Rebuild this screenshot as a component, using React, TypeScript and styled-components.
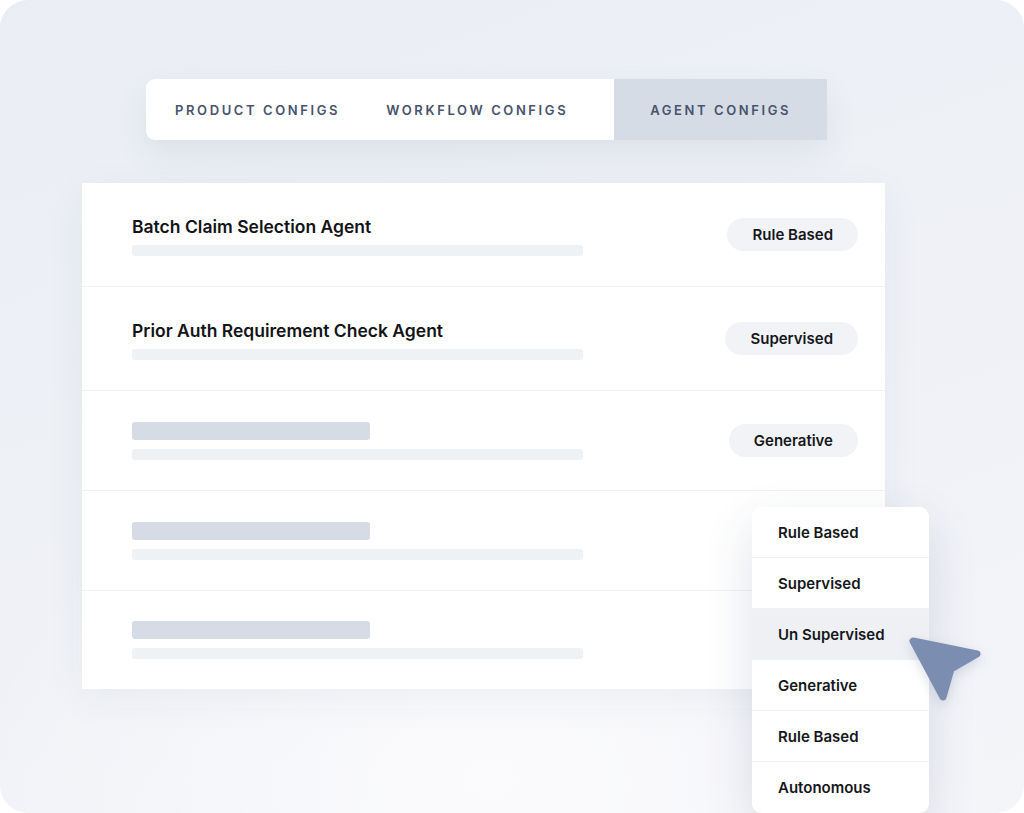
import React from 'react'
import styled, { createGlobalStyle } from 'styled-components'

const GlobalStyle = createGlobalStyle`
  html, body {
    margin: 0;
    padding: 0;
    background: #ffffff;
  }
  body {
    font-family: Inter, "Noto Sans", "Liberation Sans", sans-serif;
    -webkit-font-smoothing: antialiased;
  }
`

const Stage = styled.div`
  position: relative;
  width: 1024px;
  height: 813px;
  box-sizing: border-box;
  border-radius: 28px;
  overflow: hidden;
  padding: 79px 0 0 82px;
  display: flex;
  flex-direction: column;
  align-items: flex-start;
  gap: 43px;
  background:
    radial-gradient(ellipse 520px 360px at 48% 96%, #fbfbfd 0%, rgba(251, 251, 253, 0) 100%),
    linear-gradient(160deg, #eaeef4 0%, #eff1f6 55%, #f4f5f9 100%);
`

const TabBar = styled.nav`
  display: flex;
  height: 61px;
  margin-left: 64px;
  border-radius: 9px 0 0 9px;
  background: #ffffff;
  box-shadow: 0 14px 34px rgba(40, 60, 100, 0.08);
`

const TabGroup = styled.div`
  display: flex;
  align-items: center;
  gap: 46px;
  padding: 0 46px 0 29px;
`

const Tab = styled.div<{ $active?: boolean }>`
  display: flex;
  align-items: center;
  height: 100%;
  font-size: 13px;
  font-weight: 600;
  letter-spacing: 2.6px;
  color: #48536c;
  white-space: nowrap;
  ${(p) => p.$active && `
    padding: 0 36px;
    background: #d6dce6;
  `}
`

const Table = styled.section`
  width: 803px;
  background: #ffffff;
  box-shadow: 0 10px 40px rgba(40, 60, 100, 0.05);
`

const Row = styled.div<{ $h: number }>`
  display: flex;
  align-items: center;
  justify-content: space-between;
  height: ${(p) => p.$h}px;
  box-sizing: border-box;
  padding: 0 27px 0 50px;
  border-bottom: 1px solid #eef1f5;
  &:last-child {
    border-bottom: none;
  }
`

const RowText = styled.div`
  display: flex;
  flex-direction: column;
  width: 451px;
`

const RowTitle = styled.div`
  font-size: 17.5px;
  line-height: 22px;
  font-weight: 600;
  letter-spacing: 0;
  color: #121417;
  margin: 2px 0 7px;
`

const TitleBar = styled.div`
  width: 238px;
  height: 18px;
  border-radius: 3px;
  background: #d6dce5;
  margin-bottom: 9px;
`

const SubBar = styled.div`
  width: 100%;
  height: 11px;
  border-radius: 3px;
  background: #eff2f5;
`

const Pill = styled.span`
  display: inline-flex;
  align-items: center;
  justify-content: center;
  height: 33px;
  padding: 0 25px;
  border-radius: 17px;
  background: #f1f3f6;
  font-size: 15px;
  font-weight: 600;
  color: #15171b;
`

const Menu = styled.ul`
  position: absolute;
  left: 752px;
  top: 507px;
  width: 177px;
  margin: 0;
  padding: 0;
  list-style: none;
  background: #ffffff;
  border-radius: 10px;
  overflow: hidden;
  box-shadow: 0 18px 50px rgba(40, 60, 100, 0.14);
`

const MenuItem = styled.li<{ $hover?: boolean }>`
  display: flex;
  align-items: center;
  height: 51px;
  box-sizing: border-box;
  padding-left: 26px;
  font-size: 15px;
  font-weight: 600;
  color: #15171b;
  background: ${(p) => (p.$hover ? '#eef0f4' : '#ffffff')};
  border-bottom: 1px solid #eef1f5;
  &:last-child {
    border-bottom: none;
  }
`

const Pointer = styled.svg`
  position: absolute;
  left: 900px;
  top: 628px;
  filter: drop-shadow(0 4px 6px rgba(60, 80, 120, 0.18));
`

type Agent = { name?: string; mode?: string; h: number }

const agents: Agent[] = [
  { name: 'Batch Claim Selection Agent', mode: 'Rule Based', h: 104 },
  { name: 'Prior Auth Requirement Check Agent', mode: 'Supervised', h: 104 },
  { mode: 'Generative', h: 100 },
  { h: 100 },
  { h: 98 },
]

const modes = ['Rule Based', 'Supervised', 'Un Supervised', 'Generative', 'Rule Based', 'Autonomous']

function CursorArrow() {
  return (
    <Pointer width="90" height="80" viewBox="0 0 90 80">
      <path
        d="M13 13 L77 26 L51 41 L43 69 Z"
        fill="#7b8db0"
        stroke="#7b8db0"
        strokeWidth="7"
        strokeLinejoin="round"
      />
    </Pointer>
  )
}

export default function App() {
  return (
    <>
      <GlobalStyle />
      <Stage>
        <TabBar>
          <TabGroup>
            <Tab>PRODUCT CONFIGS</Tab>
            <Tab>WORKFLOW CONFIGS</Tab>
          </TabGroup>
          <Tab $active>AGENT CONFIGS</Tab>
        </TabBar>

        <Table>
          {agents.map((a, i) => (
            <Row key={i} $h={a.h}>
              <RowText>
                {a.name ? <RowTitle>{a.name}</RowTitle> : <TitleBar />}
                <SubBar />
              </RowText>
              {a.mode && <Pill>{a.mode}</Pill>}
            </Row>
          ))}
        </Table>

        <Menu>
          {modes.map((m, i) => (
            <MenuItem key={i} $hover={i === 2}>
              {m}
            </MenuItem>
          ))}
        </Menu>

        <CursorArrow />
      </Stage>
    </>
  )
}
